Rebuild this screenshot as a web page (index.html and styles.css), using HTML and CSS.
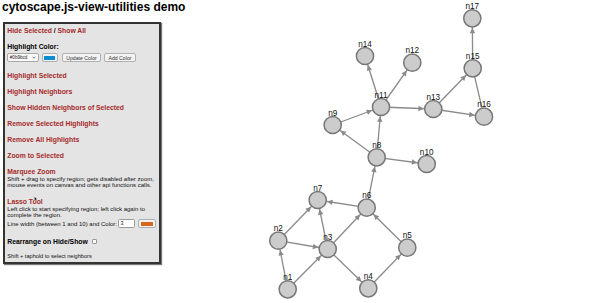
FILE: index.html
```html
<!DOCTYPE html>
<html>
<head>
<meta charset="utf-8">
<title>cytoscape.js-view-utilities demo</title>
<link rel="stylesheet" href="styles.css">
</head>
<body>
<div class="page">
  <aside class="side">
    <h1 class="title">cytoscape.js-view-utilities demo</h1>
    <div class="panel">
      <div class="line-a"><a href="#">Hide Selected</a> / <a href="#">Show All</a></div>
      <div class="label-b">Highlight Color:</div>
      <div class="controls">
        <div class="select"><span>#0b9bcd</span><svg class="chev" viewBox="0 0 6 4" width="4" height="3"><path d="M0.8 0.8 L3 3 L5.2 0.8" fill="none" stroke="#333" stroke-width="1"/></svg></div>
        <button class="btn swatch-btn"><span class="swatch blue"></span></button>
        <button class="btn upd">Update Color</button>
        <button class="btn add">Add Color</button>
      </div>
      <div class="links">
        <div class="link-row"><a href="#">Highlight Selected</a></div>
        <div class="link-row"><a href="#">Highlight Neighbors</a></div>
        <div class="link-row"><a href="#">Show Hidden Neighbors of Selected</a></div>
        <div class="link-row"><a href="#">Remove Selected Highlights</a></div>
        <div class="link-row"><a href="#">Remove All Highlights</a></div>
        <div class="link-row"><a href="#">Zoom to Selected</a></div>
      </div>
      <div class="sect-title marquee"><a href="#">Marquee Zoom</a></div>
      <p class="note first">Shift + drag to specify region; gets disabled after zoom,<br>mouse events on canvas and other api functions calls.</p>
      <div class="sect-title lasso"><a href="#">Lasso Tool</a></div>
      <p class="note">Left click to start specifying region; left click again to<br>complete the region.</p>
      <div class="lw-row">
        <span class="note-inline">Line width (between 1 and 10) and Color:</span>
        <span class="num-input">3</span>
        <button class="btn swatch-btn2"><span class="swatch orange"></span></button>
      </div>
      <div class="rearrange">Rearrange on Hide/Show <span class="checkbox"></span></div>
      <div class="tap-note">Shift + taphold to select neighbors</div>
      <svg class="cursor" viewBox="0 0 5 7" width="4.2" height="6"><path d="M0.5 0.5 L0.5 5.6 L1.7 4.5 L2.6 6.4 L3.4 6 L2.5 4.2 L4.1 4.2 Z" fill="#000" stroke="#fff" stroke-width="0.5" stroke-linejoin="round"/></svg>
    </div>
  </aside>
  <svg class="graph" width="435" height="303" viewBox="165 0 435 303">
    <defs>
      <marker id="arr" viewBox="0 0 20 10" refX="19.5" refY="5" markerWidth="20" markerHeight="10" markerUnits="userSpaceOnUse" orient="auto">
        <path d="M4.6 2.3 L10 5 L4.6 7.7 Z" fill="#8a8a8a"/>
      </marker>
    </defs>
    <g class="edges" stroke="#8a8a8a" stroke-width="1.3" marker-end="url(#arr)">
      <line x1="287.7" y1="289.3" x2="278.3" y2="240.7"/>
      <line x1="287.7" y1="289.3" x2="327.7" y2="249"/>
      <line x1="278.3" y1="240.7" x2="317.7" y2="200"/>
      <line x1="278.3" y1="240.7" x2="327.7" y2="249"/>
      <line x1="327.7" y1="249" x2="317.7" y2="200"/>
      <line x1="327.7" y1="249" x2="366.7" y2="207.7"/>
      <line x1="327.7" y1="249" x2="368.3" y2="288.3"/>
      <line x1="368.3" y1="288.3" x2="407.3" y2="247.7"/>
      <line x1="407.3" y1="247.7" x2="366.7" y2="207.7"/>
      <line x1="366.7" y1="207.7" x2="317.7" y2="200"/>
      <line x1="366.7" y1="207.7" x2="376.7" y2="157.3"/>
      <line x1="376.7" y1="157.3" x2="426.7" y2="164"/>
      <line x1="376.7" y1="157.3" x2="332.7" y2="125"/>
      <line x1="376.7" y1="157.3" x2="381" y2="107"/>
      <line x1="332.7" y1="125" x2="381" y2="107"/>
      <line x1="381" y1="107" x2="365" y2="56"/>
      <line x1="381" y1="107" x2="412.3" y2="62.7"/>
      <line x1="381" y1="107" x2="433.3" y2="109"/>
      <line x1="433.3" y1="109" x2="472.7" y2="68.3"/>
      <line x1="433.3" y1="109" x2="484" y2="116.7"/>
      <line x1="472.7" y1="68.3" x2="472.3" y2="18.3"/>
      <line x1="472.7" y1="68.3" x2="484" y2="116.7" marker-end="none"/>
    </g>
    <g class="nodes" fill="#cccccc" stroke="#777777" stroke-width="1.5">
      <circle cx="287.7" cy="289.3" r="8.6"/>
      <circle cx="278.3" cy="240.7" r="8.6"/>
      <circle cx="327.7" cy="249" r="8.6"/>
      <circle cx="368.3" cy="288.3" r="8.6"/>
      <circle cx="407.3" cy="247.7" r="8.6"/>
      <circle cx="366.7" cy="207.7" r="8.6"/>
      <circle cx="317.7" cy="200" r="8.6"/>
      <circle cx="376.7" cy="157.3" r="8.6"/>
      <circle cx="332.7" cy="125" r="8.6"/>
      <circle cx="426.7" cy="164" r="8.6"/>
      <circle cx="381" cy="107" r="8.6"/>
      <circle cx="412.3" cy="62.7" r="8.6"/>
      <circle cx="433.3" cy="109" r="8.6"/>
      <circle cx="365" cy="56" r="8.6"/>
      <circle cx="472.7" cy="68.3" r="8.6"/>
      <circle cx="484" cy="116.7" r="8.6"/>
      <circle cx="472.3" cy="18.3" r="8.6"/>
    </g>
    <g class="labels">
      <text x="287.7" y="279.8">n1</text>
      <text x="278.3" y="231.2">n2</text>
      <text x="327.7" y="239.5">n3</text>
      <text x="368.3" y="278.8">n4</text>
      <text x="407.3" y="238.2">n5</text>
      <text x="366.7" y="198.2">n6</text>
      <text x="317.7" y="190.5">n7</text>
      <text x="376.7" y="147.8">n8</text>
      <text x="332.7" y="115.5">n9</text>
      <text x="426.7" y="154.5">n10</text>
      <text x="381" y="97.5">n11</text>
      <text x="412.3" y="53.2">n12</text>
      <text x="433.3" y="99.5">n13</text>
      <text x="365" y="46.5">n14</text>
      <text x="472.7" y="58.8">n15</text>
      <text x="484" y="107.2">n16</text>
      <text x="472.3" y="8.8">n17</text>
    </g>
  </svg>
</div>
</body>
</html>
```

FILE: styles.css
```css
html, body {
  margin: 0;
  padding: 0;
  background: #ffffff;
}
body {
  font-family: "Liberation Sans", Arial, Helvetica, sans-serif;
  color: #111;
}
.page {
  display: flex;
  width: 600px;
  height: 303px;
  overflow: hidden;
}
.side {
  width: 165px;
  flex: none;
}
.title {
  margin: 0.5px 0 9.5px 2px;
  font-size: 12px;
  line-height: 12px;
  font-weight: bold;
  white-space: nowrap;
  color: #000;
}
.panel {
  position: relative;
  margin-left: 3px;
  width: 158px;
  height: 242px;
  box-sizing: border-box;
  border: 2px solid #333;
  box-shadow: 1px 1px 1px #777;
  background: #e4e4e4;
  padding: 0 2px 0 2.3px;
  overflow: hidden;
}
.panel a {
  color: #a52a2a;
  text-decoration: none;
}
.line-a {
  font-size: 6.8px;
  line-height: 14px;
  font-weight: bold;
  white-space: nowrap;
}
.label-b {
  margin-top: 5px;
  font-size: 6.8px;
  line-height: 8px;
  font-weight: bold;
  color: #000;
}
.controls {
  margin-top: 2px;
  height: 9px;
  display: flex;
  align-items: stretch;
}
.select {
  width: 32px;
  box-sizing: border-box;
  border: 1px solid #a8a8a8;
  border-radius: 2px;
  background: #fafafa;
  display: flex;
  align-items: center;
  justify-content: space-between;
  padding: 0 2px 0 1.5px;
  font-size: 4.6px;
  color: #222;
}
.chev {
  display: block;
}
.btn {
  margin: 0;
  padding: 0;
  box-sizing: border-box;
  border: 1px solid #b0b0b0;
  border-radius: 2px;
  background: #f3f3f3;
  font-family: "Liberation Sans", Arial, sans-serif;
  font-size: 5.2px;
  color: #333;
  display: flex;
  align-items: center;
  justify-content: center;
}
.swatch-btn {
  width: 16px;
  margin-left: 2.7px;
  padding: 1.5px 1.5px;
}
.swatch {
  display: block;
  width: 100%;
  height: 100%;
}
.swatch.blue {
  background: #0b8fd0;
}
.swatch.orange {
  background: #d2691e;
}
.upd {
  width: 39px;
  margin-left: 4px;
}
.add {
  width: 32px;
  margin-left: 3px;
}
.links {
  margin-top: 6px;
}
.link-row {
  font-size: 6.8px;
  line-height: 16px;
  height: 16px;
  font-weight: bold;
  white-space: nowrap;
}
.sect-title {
  font-size: 6.8px;
  line-height: 8px;
  font-weight: bold;
}
.sect-title.marquee {
  margin-top: 3.7px;
}
.sect-title.lasso {
  margin-top: 8.8px;
}
.note {
  margin: 0;
  font-size: 6px;
  line-height: 6.4px;
  white-space: nowrap;
  color: #111;
}
.note.first {
  margin-top: 0.4px;
}
.lw-row {
  margin-top: 0.5px;
  height: 9px;
  display: flex;
  align-items: center;
}
.note-inline {
  font-size: 6px;
  white-space: nowrap;
}
.num-input {
  margin-left: 1px;
  width: 17px;
  height: 9px;
  box-sizing: border-box;
  border: 1px solid #9a9a9a;
  border-radius: 1.5px;
  background: #fff;
  font-size: 5.4px;
  line-height: 7px;
  padding-left: 1.5px;
}
.swatch-btn2 {
  width: 18px;
  height: 9px;
  margin-left: 2.5px;
  padding: 1.5px 2px;
}
.rearrange {
  margin-top: 9.7px;
  font-size: 6.8px;
  line-height: 8px;
  font-weight: bold;
  color: #000;
  display: flex;
  align-items: center;
  white-space: pre;
}
.checkbox {
  display: inline-block;
  width: 5px;
  height: 5px;
  box-sizing: border-box;
  border: 1px solid #999;
  border-radius: 1px;
  background: #fff;
  margin-left: 2px;
}
.tap-note {
  margin-top: 7.5px;
  font-size: 5.6px;
  line-height: 7px;
  color: #111;
}
.cursor {
  position: absolute;
  left: 29px;
  top: 172px;
  display: block;
}
.graph {
  display: block;
  flex: none;
}
.labels text {
  font-family: "Liberation Sans", Arial, sans-serif;
  font-size: 8.2px;
  fill: #111;
  text-anchor: middle;
}
```
